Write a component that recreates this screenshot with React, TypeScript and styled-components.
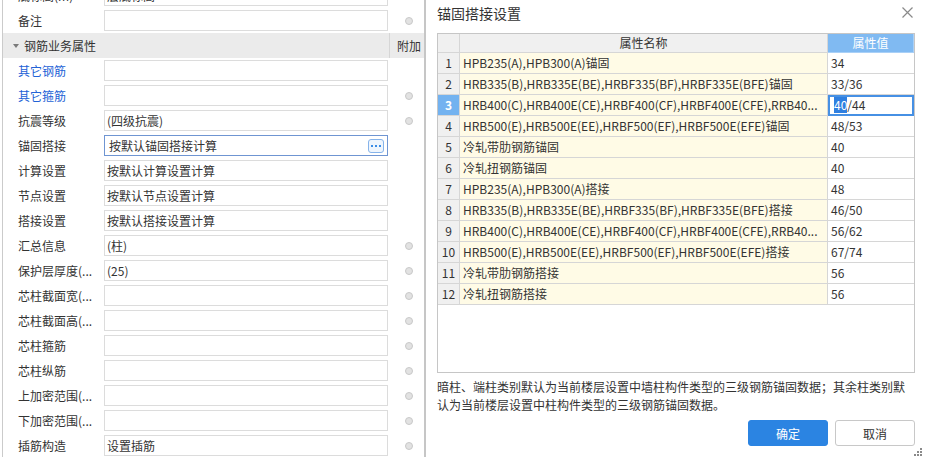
import React from 'react';
import styled, { createGlobalStyle } from 'styled-components';

const FONT = `"Microsoft YaHei", "Noto Sans CJK SC", "Noto Sans", sans-serif`;

const GlobalStyle = createGlobalStyle`
  html, body { margin: 0; padding: 0; background: #fff; }
  body { font-family: ${FONT}; font-size: 12px; color: #333; overflow: hidden; }
  * { box-sizing: border-box; }
`;

const Screen = styled.div`
  display: flex;
  width: 925px;
  height: 457px;
  overflow: hidden;
  background: #fff;
`;

/* ---------- property panel ---------- */
const PropertyPanel = styled.div`
  width: 426px;
  flex: none;
  height: 100%;
  overflow: hidden;
  padding-left: 2px;
  border-right: 2px solid #c6c6c6;
`;

const Sheet = styled.div`
  height: 100%;
  border-left: 1px solid #cbcbcb;
  overflow: hidden;
`;

const PropList = styled.div`
  margin-top: -17px;
`;

const PropRow = styled.div`
  height: 25px;
  display: grid;
  grid-template-columns: 101px 284px 1fr;
  align-items: center;
`;

const PropLabel = styled.div<{ $link?: boolean }>`
  padding-left: 15px;
  white-space: nowrap;
  overflow: hidden;
  color: ${(p) => (p.$link ? '#2362d6' : '#333')};
  line-height: 25px;
`;

const ValueBox = styled.div<{ $focused?: boolean }>`
  height: 21px;
  display: flex;
  align-items: center;
  border: 1px solid ${(p) => (p.$focused ? '#6f95d2' : '#dcdcdc')};
  padding-left: ${(p) => (p.$focused ? '4px' : '2px')};
  padding-right: 3px;
  white-space: nowrap;
  overflow: hidden;
  background: #fff;
`;

const MoreButton = styled.div`
  margin-left: auto;
  width: 16px;
  height: 14px;
  border: 1px solid #86b3ea;
  border-radius: 3px;
  background: #eef5fd;
  display: flex;
  align-items: center;
  justify-content: center;
  gap: 2px;
`;

const Dot = styled.span`
  width: 2px;
  height: 2px;
  background: #3a8ce6;
`;

const Radio = styled.span`
  width: 8px;
  height: 8px;
  margin-left: 17px;
  border-radius: 50%;
  background: #e2e2e2;
  border: 1px solid #c9c9c9;
`;

const GroupHeader = styled.div`
  height: 25px;
  display: grid;
  grid-template-columns: 386px 1px 1fr;
  align-items: stretch;
  background: #ebebeb;
`;

const GroupTitle = styled.div`
  display: flex;
  align-items: center;
  padding-left: 10px;
  gap: 5px;
`;

const Caret = styled.span`
  width: 0;
  height: 0;
  border-left: 3.5px solid transparent;
  border-right: 3.5px solid transparent;
  border-top: 4px solid #7a7a7a;
`;

const GroupDivider = styled.div`
  background: #d6d6d6;
`;

const GroupExtra = styled.div`
  padding-left: 7px;
  line-height: 25px;
  white-space: nowrap;
`;

/* ---------- dialog ---------- */
const Dialog = styled.div`
  flex: 1;
  position: relative;
  display: flex;
  flex-direction: column;
  padding: 0 10px 0 11px;
  background: #fff;
`;

const TitleBar = styled.div`
  height: 33px;
  flex: none;
  display: flex;
  justify-content: space-between;
  align-items: flex-start;
  padding-top: 4px;
`;

const Title = styled.div`
  font-size: 14px;
  line-height: 18px;
  color: #333;
`;

const CloseIcon = styled.svg`
  margin-top: 3px;
  margin-right: 2px;
`;

const Grid = styled.div`
  height: 340px;
  flex: none;
  border: 1px solid #c6c6c6;
  overflow: hidden;
  background: #fff;
`;

const GridRow = styled.div<{ $head?: boolean }>`
  display: grid;
  grid-template-columns: 22px 368px 1fr;
  height: ${(p) => (p.$head ? '19px' : '21px')};
`;

const Cell = styled.div`
  border-right: 1px solid #d6d6d6;
  border-bottom: 1px solid #d6d6d6;
  white-space: nowrap;
  overflow: hidden;
  line-height: 20px;
`;

const HeadCell = styled(Cell)<{ $accent?: boolean }>`
  background: ${(p) => (p.$accent ? '#80baf2' : '#f0f0f0')};
  color: ${(p) => (p.$accent ? '#fff' : '#333')};
  border-color: ${(p) => (p.$accent ? '#a9d0f7' : '#d6d6d6')};
  text-align: center;
  line-height: 18px;
`;

const IndexCell = styled(Cell)<{ $selected?: boolean }>`
  background: ${(p) => (p.$selected ? '#73b2f0' : '#f0f0f0')};
  color: ${(p) => (p.$selected ? '#fff' : '#333')};
  font-weight: ${(p) => (p.$selected ? 700 : 400)};
  text-align: center;
`;

const NameCell = styled(Cell)`
  background: #fffbe6;
  padding-left: 3px;
`;

const ValueCell = styled(Cell)<{ $editing?: boolean }>`
  background: #fff;
  border-right: none;
  padding-left: ${(p) => (p.$editing ? '6px' : '3px')};
  ${(p) =>
    p.$editing
      ? `outline: 2px solid #4690e4; outline-offset: -2px; line-height: 20px;`
      : ''}
`;

const Selection = styled.span`
  background: #2f7fe0;
  color: #fff;
`;

const Note = styled.div`
  margin-top: 5px;
  line-height: 18px;
  color: #333;
`;

const Footer = styled.div`
  margin-top: 6px;
  display: flex;
  justify-content: flex-end;
  gap: 7px;
`;

const Button = styled.button<{ $primary?: boolean }>`
  width: 80px;
  height: 26px;
  border-radius: 3px;
  font-family: ${FONT};
  font-size: 12px;
  padding: 0;
  cursor: pointer;
  background: ${(p) => (p.$primary ? '#2b84e2' : '#fff')};
  color: ${(p) => (p.$primary ? '#fff' : '#333')};
  border: 1px solid ${(p) => (p.$primary ? '#2b84e2' : '#c8c8c8')};
`;

const Grip = styled.svg`
  position: absolute;
  right: 3px;
  bottom: 1px;
`;

type Prop = {
  label: string;
  value?: string;
  link?: boolean;
  radio?: boolean;
  focused?: boolean;
};

const topProps: Prop[] = [
  { label: '底标高(m)', value: '层底标高' },
  { label: '备注', radio: true },
];

const groupProps: Prop[] = [
  { label: '其它钢筋', link: true },
  { label: '其它箍筋', link: true, radio: true },
  { label: '抗震等级', value: '(四级抗震)', radio: true },
  { label: '锚固搭接', value: '按默认锚固搭接计算', focused: true },
  { label: '计算设置', value: '按默认计算设置计算' },
  { label: '节点设置', value: '按默认节点设置计算' },
  { label: '搭接设置', value: '按默认搭接设置计算' },
  { label: '汇总信息', value: '(柱)', radio: true },
  { label: '保护层厚度(...', value: '(25)', radio: true },
  { label: '芯柱截面宽(...', radio: true },
  { label: '芯柱截面高(...', radio: true },
  { label: '芯柱箍筋', radio: true },
  { label: '芯柱纵筋', radio: true },
  { label: '上加密范围(...', radio: true },
  { label: '下加密范围(...', radio: true },
  { label: '插筋构造', value: '设置插筋', radio: true },
];

const rows: [string, string][] = [
  ['HPB235(A),HPB300(A)锚固', '34'],
  ['HRB335(B),HRB335E(BE),HRBF335(BF),HRBF335E(BFE)锚固', '33/36'],
  ['HRB400(C),HRB400E(CE),HRBF400(CF),HRBF400E(CFE),RRB40...', '40/44'],
  ['HRB500(E),HRB500E(EE),HRBF500(EF),HRBF500E(EFE)锚固', '48/53'],
  ['冷轧带肋钢筋锚固', '40'],
  ['冷轧扭钢筋锚固', '40'],
  ['HPB235(A),HPB300(A)搭接', '48'],
  ['HRB335(B),HRB335E(BE),HRBF335(BF),HRBF335E(BFE)搭接', '46/50'],
  ['HRB400(C),HRB400E(CE),HRBF400(CF),HRBF400E(CFE),RRB40...', '56/62'],
  ['HRB500(E),HRB500E(EE),HRBF500(EF),HRBF500E(EFE)搭接', '67/74'],
  ['冷轧带肋钢筋搭接', '56'],
  ['冷轧扭钢筋搭接', '56'],
];

const PropLine: React.FC<{ p: Prop }> = ({ p }) => (
  <PropRow>
    <PropLabel $link={p.link}>{p.label}</PropLabel>
    <ValueBox $focused={p.focused}>
      {p.value}
      {p.focused && (
        <MoreButton>
          <Dot />
          <Dot />
          <Dot />
        </MoreButton>
      )}
    </ValueBox>
    <div style={{ display: 'flex' }}>{p.radio && <Radio />}</div>
  </PropRow>
);

export default function App() {
  return (
    <>
      <GlobalStyle />
      <Screen>
        <PropertyPanel>
          <Sheet>
            <PropList>
              {topProps.map((p) => (
                <PropLine key={p.label} p={p} />
              ))}
              <GroupHeader>
                <GroupTitle>
                  <Caret />
                  钢筋业务属性
                </GroupTitle>
                <GroupDivider />
                <GroupExtra>附加</GroupExtra>
              </GroupHeader>
              {groupProps.map((p) => (
                <PropLine key={p.label} p={p} />
              ))}
            </PropList>
          </Sheet>
        </PropertyPanel>

        <Dialog>
          <TitleBar>
            <Title>锚固搭接设置</Title>
            <CloseIcon width="11" height="11" viewBox="0 0 11 11">
              <path d="M0.5 0.5 L10.5 10.5 M10.5 0.5 L0.5 10.5" stroke="#8a8a8a" strokeWidth="1.2" fill="none" />
            </CloseIcon>
          </TitleBar>

          <Grid>
            <GridRow $head>
              <HeadCell />
              <HeadCell>属性名称</HeadCell>
              <HeadCell $accent>属性值</HeadCell>
            </GridRow>
            {rows.map(([name, value], i) => (
              <GridRow key={i}>
                <IndexCell $selected={i === 2}>{i + 1}</IndexCell>
                <NameCell>{name}</NameCell>
                {i === 2 ? (
                  <ValueCell $editing>
                    <Selection>40</Selection>/44
                  </ValueCell>
                ) : (
                  <ValueCell>{value}</ValueCell>
                )}
              </GridRow>
            ))}
          </Grid>

          <Note>
            暗柱、端柱类别默认为当前楼层设置中墙柱构件类型的三级钢筋锚固数据；其余柱类别默
            <br />
            认为当前楼层设置中柱构件类型的三级钢筋锚固数据。
          </Note>

          <Footer>
            <Button $primary>确定</Button>
            <Button>取消</Button>
          </Footer>

          <Grip width="9" height="9" viewBox="0 0 9 9">
            <rect x="7" y="1" width="2" height="2" fill="#8a8a8a" />
            <rect x="4" y="4" width="2" height="2" fill="#8a8a8a" />
            <rect x="7" y="4" width="2" height="2" fill="#8a8a8a" />
            <rect x="1" y="7" width="2" height="2" fill="#8a8a8a" />
            <rect x="4" y="7" width="2" height="2" fill="#8a8a8a" />
            <rect x="7" y="7" width="2" height="2" fill="#8a8a8a" />
          </Grip>
        </Dialog>
      </Screen>
    </>
  );
}
